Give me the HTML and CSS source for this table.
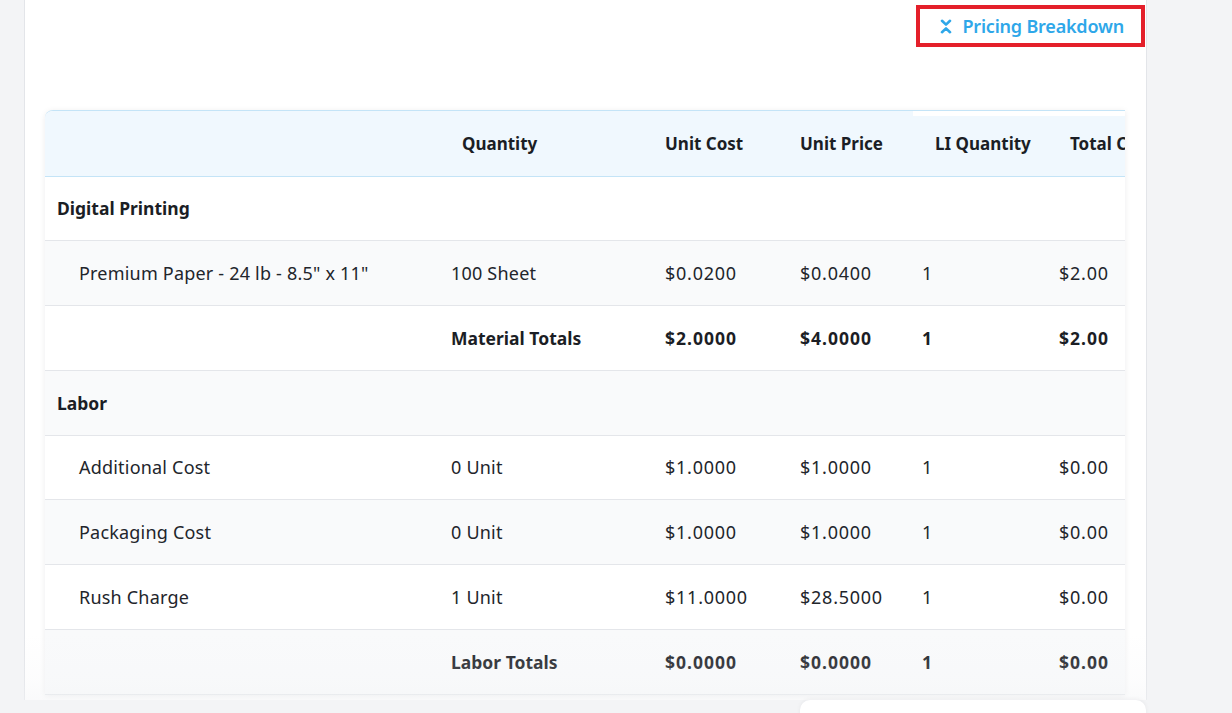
FILE: index.html
```html
<!DOCTYPE html>
<html lang="en">
<head>
<meta charset="utf-8">
<title>Pricing Breakdown</title>
<link rel="stylesheet" href="styles.css">
</head>
<body>
<div class="page">
  <div class="panel">
    <div class="toolbar">
      <button class="toggle" type="button">
        <svg class="toggle-icon" width="12" height="15" viewBox="0 0 12 15" aria-hidden="true">
          <path d="M2 1.8 L6 5.6 L10 1.8 M2 13.2 L6 9.4 L10 13.2" fill="none" stroke="currentColor" stroke-width="2.6" stroke-linecap="round" stroke-linejoin="round"/>
        </svg>
        <span>Pricing Breakdown</span>
      </button>
    </div>
    <div class="card">
      <div class="hdr-mask"></div>
      <table class="grid">
        <colgroup>
          <col class="c-name">
          <col class="c-qty">
          <col class="c-cost">
          <col class="c-price">
          <col class="c-li">
          <col class="c-total">
          <col class="c-extra">
        </colgroup>
        <thead>
          <tr>
            <th></th>
            <th class="h-qty">Quantity</th>
            <th class="h-cost">Unit Cost</th>
            <th class="h-price">Unit Price</th>
            <th class="h-li">LI Quantity</th>
            <th class="h-total">Total Cost</th>
            <th></th>
          </tr>
        </thead>
        <tbody>
          <tr class="group"><td>Digital Printing</td><td></td><td></td><td></td><td></td><td></td><td></td></tr>
          <tr class="item"><td>Premium Paper - 24 lb - 8.5" x 11"</td><td>100 Sheet</td><td class="num">$0.0200</td><td class="num">$0.0400</td><td class="num">1</td><td class="num">$2.00</td><td></td></tr>
          <tr class="total"><td></td><td>Material Totals</td><td class="num">$2.0000</td><td class="num">$4.0000</td><td class="num">1</td><td class="num">$2.00</td><td></td></tr>
          <tr class="group"><td>Labor</td><td></td><td></td><td></td><td></td><td></td><td></td></tr>
          <tr class="item"><td>Additional Cost</td><td>0 Unit</td><td class="num">$1.0000</td><td class="num">$1.0000</td><td class="num">1</td><td class="num">$0.00</td><td></td></tr>
          <tr class="item"><td>Packaging Cost</td><td>0 Unit</td><td class="num">$1.0000</td><td class="num">$1.0000</td><td class="num">1</td><td class="num">$0.00</td><td></td></tr>
          <tr class="item"><td>Rush Charge</td><td>1 Unit</td><td class="num">$11.0000</td><td class="num">$28.5000</td><td class="num">1</td><td class="num">$0.00</td><td></td></tr>
          <tr class="total"><td></td><td>Labor Totals</td><td class="num">$0.0000</td><td class="num">$0.0000</td><td class="num">1</td><td class="num">$0.00</td><td></td></tr>
        </tbody>
      </table>
    </div>
  </div>
  <div class="fade"></div>
  <div class="dock"></div>
</div>
</body>
</html>
```

FILE: styles.css
```css
* { box-sizing: border-box; }

html, body {
  margin: 0;
  padding: 0;
  background: #f3f4f6;
  font-family: "Noto Sans", "Open Sans", "Liberation Sans", sans-serif;
  color: #22252b;
}

.page {
  position: relative;
  width: 1232px;
  height: 713px;
  overflow: hidden;
}

.panel {
  margin-left: 24px;
  width: 1123px;
  height: 700px;
  background: #ffffff;
  border-left: 1px solid #e3e5e9;
  border-right: 1px solid #e3e5e9;
  overflow: hidden;
}

.toolbar {
  display: flex;
  justify-content: flex-end;
  padding-top: 5px;
  padding-right: 1px;
}

.toggle {
  display: flex;
  align-items: center;
  gap: 10px;
  height: 42px;
  padding: 0 17px 0 20px;
  border: 4px solid #e41f2a;
  background: #ffffff;
  color: #2ea7e9;
  font-family: inherit;
  font-size: 18px;
  font-weight: 600;
  letter-spacing: -0.2px;
  cursor: pointer;
}

.toggle-icon { display: block; flex: none; }

.card {
  position: relative;
  margin-top: 63px;
  margin-left: 20px;
  width: 1080px;
  border-top: 1px solid #c4e4f7;
  border-radius: 8px 0 0 0;
  overflow: hidden;
  background: #ffffff;
  box-shadow: 0 1px 6px rgba(15, 23, 42, 0.08);
}

.hdr-mask {
  position: absolute;
  left: 868px;
  top: -1px;
  right: 0;
  height: 6px;
  background: #ffffff;
  z-index: 2;
}

.grid {
  width: 1202px;
  table-layout: fixed;
  border-collapse: collapse;
  font-size: 18px;
}

.c-name { width: 394px; }
.c-qty { width: 214px; }
.c-cost { width: 135px; }
.c-price { width: 122px; }
.c-li { width: 137px; }
.c-total { width: 120px; }
.c-extra { width: 80px; }

.grid th {
  height: 65px;
  padding: 0 0 0 12px;
  background: #f0f8fe;
  border-bottom: 1px solid #c4e4f7;
  text-align: left;
  font-size: 17px;
  font-weight: 700;
  color: #1b1e25;
  white-space: nowrap;
  overflow: hidden;
}

.grid th.h-qty { padding-left: 23px; }
.grid th.h-li { padding-left: 25px; }
.grid th.h-total { padding-left: 23px; }

.grid td {
  height: 64.75px;
  padding: 0 0 0 12px;
  border-bottom: 1px solid #e4e6ea;
  white-space: nowrap;
  overflow: hidden;
  color: #22252b;
  letter-spacing: 0.2px;
}

.grid td.num { letter-spacing: 0.75px; }

.grid tbody tr:nth-child(even) td { background: #f9fafb; }

.group td { font-weight: 700; color: #1b1e25; font-size: 17.5px; letter-spacing: 0; }
.item td:first-child { padding-left: 34px; }
.total td { font-weight: 700; color: #1b1e25; font-size: 17.5px; letter-spacing: 0; }
.total td.num { letter-spacing: 1px; }

.fade {
  position: absolute;
  left: 0;
  right: 0;
  bottom: 0;
  height: 80px;
  background: linear-gradient(to bottom, rgba(243, 244, 246, 0) 0%, rgba(243, 244, 246, 0.22) 60%, rgba(243, 244, 246, 0.6) 100%);
  pointer-events: none;
}

.dock {
  position: absolute;
  left: 800px;
  top: 700px;
  width: 346px;
  height: 40px;
  background: #ffffff;
  border-radius: 10px 10px 0 0;
  box-shadow: 0 -1px 4px rgba(15, 23, 42, 0.05);
}
```
